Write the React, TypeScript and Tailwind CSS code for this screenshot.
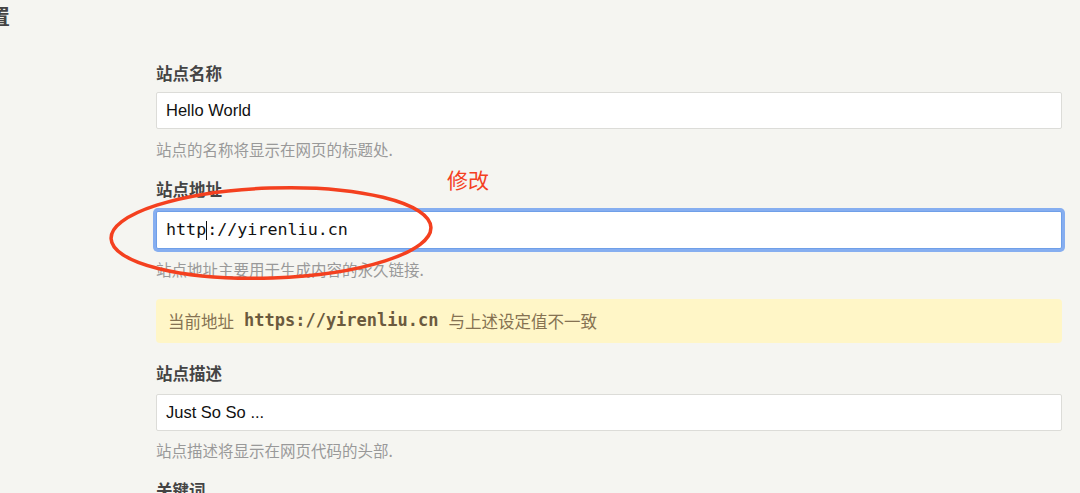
import React from "react";

const cjk = '"Noto Sans CJK SC", "Liberation Sans", sans-serif';

function Label({ children }: { children: React.ReactNode }) {
  return (
    <div className="text-[16.5px] font-bold leading-[24px] text-[#444]">{children}</div>
  );
}

function Desc({ children }: { children: React.ReactNode }) {
  return <div className="text-[15.5px] leading-[20px] text-[#999]">{children}</div>;
}

export default function App() {
  return (
    <div
      className="relative w-[1080px] h-[493px] overflow-hidden bg-[#f5f5f1]"
      style={{ fontFamily: cjk }}
    >
      <div className="h-[30px] overflow-hidden">
        <div className="ml-[-32px] pt-[1px] text-[21px] font-bold leading-[28px] text-[#444]">设置</div>
      </div>
      <div className="ml-[156px] w-[906px] flex flex-col">
        <div className="mt-[31px]">
          <Label>站点名称</Label>
        </div>
        <div className="mt-[7px] h-[37px] bg-white border border-[#dcdcd8] rounded-[2px] flex items-center px-[9px]">
          <span className="text-[16.5px] text-[#111]" style={{ fontFamily: '"Liberation Sans", Arial, sans-serif' }}>
            Hello World
          </span>
        </div>
        <div className="mt-[10px]">
          <Desc>站点的名称将显示在网页的标题处.</Desc>
        </div>
        <div className="mt-[18px]">
          <Label>站点地址</Label>
        </div>
        <div className="mt-[10px] h-[38px] bg-white border border-[#6f9fe8] rounded-[2px] ring-[3px] ring-[#86aef0] flex items-center px-[9px]">
          <span className="text-[16.7px] text-[#111]" style={{ fontFamily: '"DejaVu Sans Mono", monospace' }}>
            http
          </span>
          <span className="inline-block w-[1px] h-[19px] bg-[#111]"></span>
          <span className="text-[16.7px] text-[#111]" style={{ fontFamily: '"DejaVu Sans Mono", monospace' }}>
            ://yirenliu.cn
          </span>
        </div>
        <div className="mt-[10px]">
          <Desc>站点地址主要用于生成内容的永久链接.</Desc>
        </div>
        <div className="mt-[20px] h-[44px] bg-[#fff6c7] rounded-[4px] flex items-center px-[12px] text-[16.5px] text-[#857252]">
          <span>当前地址</span>
          <span
            className="mx-[10px] font-bold text-[17px] text-[#6b5a3e]"
            style={{ fontFamily: '"DejaVu Sans Mono", monospace' }}
          >
            https://yirenliu.cn
          </span>
          <span>与上述设定值不一致</span>
        </div>
        <div className="mt-[18px]">
          <Label>站点描述</Label>
        </div>
        <div className="mt-[9px] h-[37px] bg-white border border-[#dcdcd8] rounded-[2px] flex items-center px-[9px]">
          <span className="text-[16.5px] text-[#111]" style={{ fontFamily: '"Liberation Sans", Arial, sans-serif' }}>
            Just So So ...
          </span>
        </div>
        <div className="mt-[9px]">
          <Desc>站点描述将显示在网页代码的头部.</Desc>
        </div>
        <div className="mt-[18px]">
          <Label>关键词</Label>
        </div>
      </div>

      <svg className="absolute left-0 top-0 pointer-events-none" width="1080" height="493">
        <ellipse cx="271" cy="233" rx="160" ry="45" fill="none" stroke="#f4401f" strokeWidth="3.5" transform="rotate(-2 271 233)" />
      </svg>
      <div className="absolute left-[447px] top-[165px] text-[21px] leading-[28px] text-[#f4401f]">修改</div>
    </div>
  );
}
